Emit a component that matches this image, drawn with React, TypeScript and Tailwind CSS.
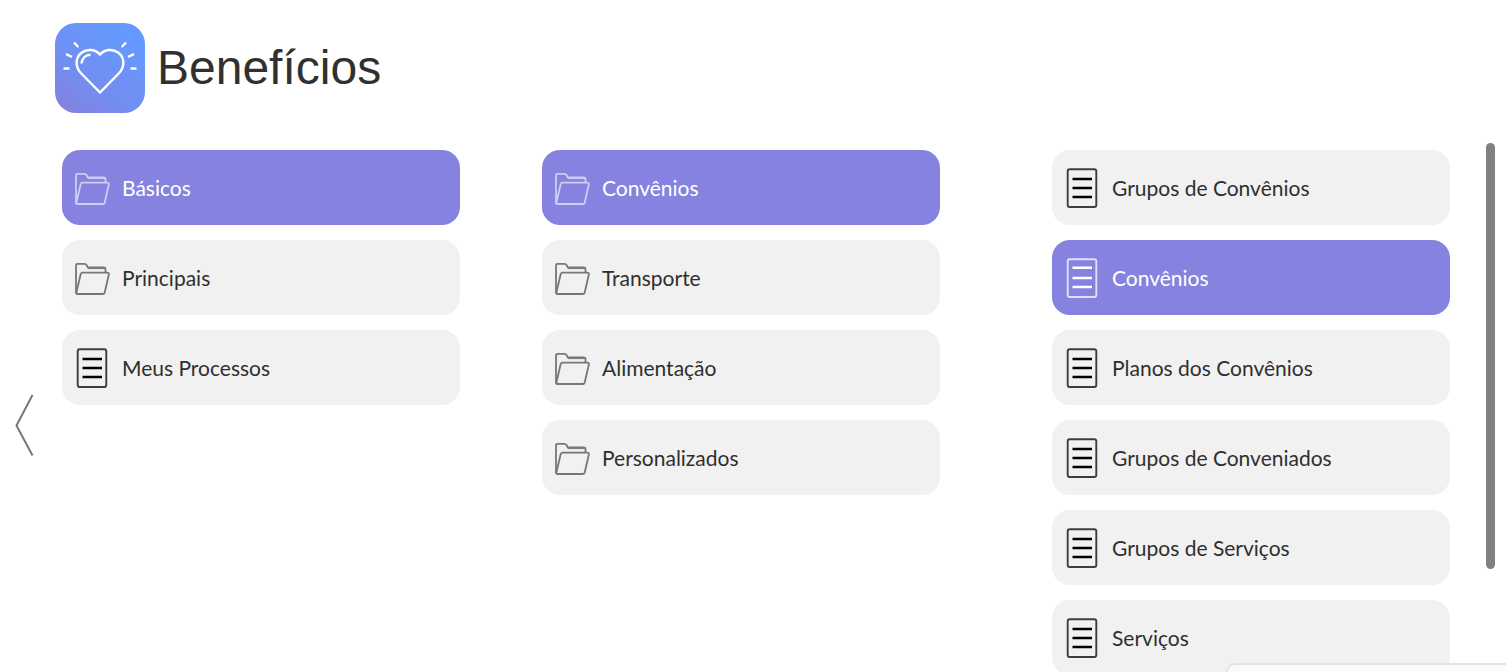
import clsx from 'clsx'

interface MenuItem {
  label: string
  kind: 'folder' | 'process'
  active?: boolean
}

const modules: MenuItem[] = [
  { label: 'Básicos', kind: 'folder', active: true },
  { label: 'Principais', kind: 'folder' },
  { label: 'Meus Processos', kind: 'process' },
]

const groups: MenuItem[] = [
  { label: 'Convênios', kind: 'folder', active: true },
  { label: 'Transporte', kind: 'folder' },
  { label: 'Alimentação', kind: 'folder' },
  { label: 'Personalizados', kind: 'folder' },
]

const processes: MenuItem[] = [
  { label: 'Grupos de Convênios', kind: 'process' },
  { label: 'Convênios', kind: 'process', active: true },
  { label: 'Planos dos Convênios', kind: 'process' },
  { label: 'Grupos de Conveniados', kind: 'process' },
  { label: 'Grupos de Serviços', kind: 'process' },
  { label: 'Serviços', kind: 'process' },
]

function BenefitsLogo() {
  return (
    <svg className="size-[90px] shrink-0" viewBox="0 0 90 90" fill="none" aria-hidden="true">
      <defs>
        <linearGradient id="logo-bg" x1="8" y1="92" x2="66" y2="10" gradientUnits="userSpaceOnUse">
          <stop offset="0" stopColor="#8780de" />
          <stop offset="0.4" stopColor="#738df0" />
          <stop offset="1" stopColor="#6499ff" />
        </linearGradient>
      </defs>
      <rect width="90" height="90" rx="21" fill="url(#logo-bg)" />
      <g stroke="#fff" strokeWidth="2.4">
        <path d="M45 69.500L25.800 50C19.800 43.500 20.500 34.500 26.500 29.800C32.500 25.200 40.500 26.500 45 31.500C49.500 26.500 57.500 25.200 63.500 29.800C69.500 34.500 70.200 43.500 64.200 50Z" />
        <path d="M26.500 40.500C27 35.500 30.500 32 35.500 31.800" />
        <path d="M19 19.500L23.300 24M11 31.200L17 34M8.500 45.500H14.500M71 19.500L66.700 24M79 31.200L73 34M75.500 45.500H81.500" />
      </g>
    </svg>
  )
}

function FolderIcon({ active }: { active?: boolean }) {
  return (
    <svg
      className={clsx('h-[41px] w-9 shrink-0', active ? 'text-[#cfccf5]' : 'text-[#777]')}
      viewBox="0 0 36 41"
      fill="none"
      stroke="currentColor"
      strokeWidth="1.800"
      strokeLinejoin="round"
      aria-hidden="true"
    >
      <path d="M2 36V8.500Q2 6.800 3.700 6.800H10.500Q12 6.800 12.500 8L13.700 10.400H29.500Q31.500 10.400 31.500 12V15" />
      <path d="M2.300 36L6.700 17Q7.200 15.600 8.700 15.600H33Q35.300 15.600 34.800 17.800L30.700 35.500Q30.300 37 28.800 37H3Q1.800 37 2.300 35" />
      <path d="M13.700 11.600H31" strokeWidth="1" />
    </svg>
  )
}

function ProcessIcon({ active }: { active?: boolean }) {
  return (
    <svg
      className={clsx('h-[41px] w-9 shrink-0', active ? 'text-white' : 'text-black')}
      viewBox="0 0 36 41"
      fill="none"
      stroke="currentColor"
      aria-hidden="true"
    >
      <rect x="3.700" y="2.200" width="28.600" height="37.800" rx="2" strokeWidth="1.900" opacity="0.75" />
      <path d={active ? 'M8.500 10.700H28M8.500 21H28M8.500 30H28' : 'M8.500 12H28M8.500 21H28M8.500 30H28'} strokeWidth="2.600" />
    </svg>
  )
}

function MenuColumn({ label, items }: { label: string; items: MenuItem[] }) {
  return (
    <ul aria-label={label} className="flex min-w-0 flex-1 flex-col gap-[15px] pt-[7px]">
      {items.map((item) => (
        <li key={item.label}>
          <button
            type="button"
            className={clsx(
              'flex h-[75px] w-full items-center gap-3 rounded-[18px] px-3 text-left text-[21px] leading-8',
              item.active ? 'bg-[#8682df] text-white' : 'bg-[#f1f1f1] text-[#2f2f2f]',
            )}
          >
            {item.kind === 'folder' ? <FolderIcon active={item.active} /> : <ProcessIcon active={item.active} />}
            <span>{item.label}</span>
          </button>
        </li>
      ))}
    </ul>
  )
}

export default function App() {
  return (
    <div className="relative flex h-screen flex-col overflow-hidden bg-white">
      <header className="flex shrink-0 items-center gap-3 px-[55px] pt-[23px]">
        <BenefitsLogo />
        <h1 className="font-['Liberation_Sans',sans-serif] text-5xl text-[#303030]">Benefícios</h1>
      </header>

      <main className="mt-[30px] flex min-h-0 flex-1 items-start pr-[11px] font-[Lato,sans-serif]">
        <button type="button" aria-label="Voltar" className="mt-[250px] w-[62px] shrink-0 pl-[14px]">
          <svg className="h-16 w-5" viewBox="0 0 20 64" fill="none" stroke="#777" strokeWidth="2" aria-hidden="true">
            <path d="M18.500 2L2.500 32.500L18.500 62.500" />
          </svg>
        </button>

        <nav className="flex min-w-0 flex-1">
          <div className="flex min-w-0 flex-2 gap-[82px]">
            <MenuColumn label="Módulos" items={modules} />
            <MenuColumn label="Grupos" items={groups} />
          </div>
          <div className="ml-[112px] flex w-[398px] shrink-0">
            <MenuColumn label="Processos" items={processes} />
          </div>
        </nav>

        {/* Scroll thumb */}
        <div className="ml-9 h-[426px] w-[9px] shrink-0 rounded-full bg-[#818181]" />
      </main>

      {/* Status bar */}
      <div className="absolute right-0 bottom-0 h-[9px] w-[280px] rounded-tl-xl border-t-2 border-l-2 border-[#e3e3e3] bg-[#fafafa]" />
    </div>
  )
}
